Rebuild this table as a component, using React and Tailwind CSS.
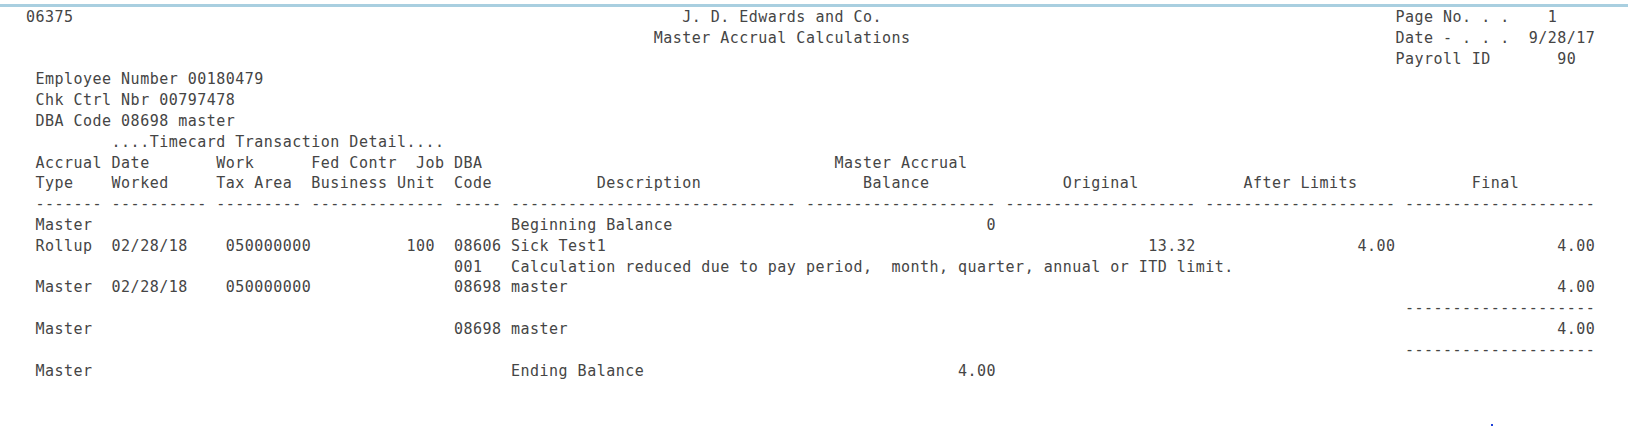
import React from "react";

// place text pieces at fixed character columns, like a line printer
function line(parts) {
  let s = "";
  for (const [col, text] of parts) {
    if (s.length < col) s += " ".repeat(col - s.length);
    s += text;
  }
  return s;
}

const dash = (n) => "-".repeat(n);

const rows = [
  [[0, "06375"], [69, "J. D. Edwards and Co."], [144, "Page No. . ."], [160, "1"]],
  [[66, "Master Accrual Calculations"], [144, "Date - . . ."], [158, "9/28/17"]],
  [[144, "Payroll ID"], [161, "90"]],
  [[1, "Employee Number 00180479"]],
  [[1, "Chk Ctrl Nbr 00797478"]],
  [[1, "DBA Code 08698 master"]],
  [[9, "....Timecard Transaction Detail...."]],
  [[1, "Accrual"], [9, "Date"], [20, "Work"], [30, "Fed Contr"], [41, "Job"], [45, "DBA"], [85, "Master Accrual"]],
  [
    [1, "Type"], [9, "Worked"], [20, "Tax Area"], [30, "Business Unit"], [45, "Code"],
    [60, "Description"], [88, "Balance"], [109, "Original"], [128, "After Limits"], [152, "Final"],
  ],
  [
    [1, dash(7)], [9, dash(10)], [20, dash(9)], [30, dash(14)], [45, dash(5)],
    [51, dash(30)], [82, dash(20)], [103, dash(20)], [124, dash(20)], [145, dash(20)],
  ],
  [[1, "Master"], [51, "Beginning Balance"], [101, "0"]],
  [
    [1, "Rollup"], [9, "02/28/18"], [21, "050000000"], [40, "100"], [45, "08606"],
    [51, "Sick Test1"], [118, "13.32"], [140, "4.00"], [161, "4.00"],
  ],
  [[45, "001"], [51, "Calculation reduced due to pay period,  month, quarter, annual or ITD limit."]],
  [[1, "Master"], [9, "02/28/18"], [21, "050000000"], [45, "08698"], [51, "master"], [161, "4.00"]],
  [[145, dash(20)]],
  [[1, "Master"], [45, "08698"], [51, "master"], [161, "4.00"]],
  [[145, dash(20)]],
  [[1, "Master"], [51, "Ending Balance"], [98, "4.00"]],
];

export default function App() {
  return (
    <div className="relative h-[432px] w-[1628px] overflow-hidden bg-white pt-[4px]">
      {/* top rule of the print preview */}
      <div className="h-[3px] w-full bg-[#a9cfe0]" />

      <div className="pl-[26px] font-['DejaVu_Sans_Mono','Liberation_Mono',monospace] text-[15px] leading-[20.8px] tracking-[0.48px] text-[#454545]">
        {rows.map((parts, i) => (
          <div key={i} className="h-[20.8px] whitespace-pre">
            {line(parts)}
          </div>
        ))}
      </div>

      {/* stray mark bottom right */}
      <span className="absolute left-[1491px] top-[424px] h-[2px] w-[2px] bg-[#1d3fd8]" />
    </div>
  );
}
